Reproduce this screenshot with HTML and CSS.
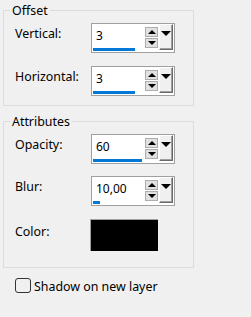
FILE: index.html
```html
<!DOCTYPE html>
<html lang="en">
<head>
    <meta charset="UTF-8">
    <title>Drop Shadow</title>
    <link rel="stylesheet" href="styles.css">
</head>
<body>
    <div class="group group-offset">
        <span class="group-title">Offset</span>
        <div class="row">
            <span class="label">Vertical:</span>
            <div class="spin">
                <div class="spin-field">
                    <span class="spin-value">3</span>
                    <div class="spin-bar" style="width: 42px"></div>
                </div>
                <div class="spin-arrows">
                    <div class="spin-btn"><span class="tri-up"></span></div>
                    <div class="spin-btn"><span class="tri-down"></span></div>
                </div>
                <div class="spin-drop"><span class="tri-drop"></span></div>
            </div>
        </div>
        <div class="row">
            <span class="label">Horizontal:</span>
            <div class="spin">
                <div class="spin-field">
                    <span class="spin-value">3</span>
                    <div class="spin-bar" style="width: 42px"></div>
                </div>
                <div class="spin-arrows">
                    <div class="spin-btn"><span class="tri-up"></span></div>
                    <div class="spin-btn"><span class="tri-down"></span></div>
                </div>
                <div class="spin-drop"><span class="tri-drop"></span></div>
            </div>
        </div>
    </div>

    <div class="group group-attr">
        <span class="group-title">Attributes</span>
        <div class="row">
            <span class="label">Opacity:</span>
            <div class="spin">
                <div class="spin-field">
                    <span class="spin-value">60</span>
                    <div class="spin-bar" style="width: 49px"></div>
                </div>
                <div class="spin-arrows">
                    <div class="spin-btn"><span class="tri-up"></span></div>
                    <div class="spin-btn"><span class="tri-down"></span></div>
                </div>
                <div class="spin-drop"><span class="tri-drop"></span></div>
            </div>
        </div>
        <div class="row">
            <span class="label">Blur:</span>
            <div class="spin">
                <div class="spin-field">
                    <span class="spin-value">10,00</span>
                    <div class="spin-bar" style="width: 7px"></div>
                </div>
                <div class="spin-arrows">
                    <div class="spin-btn"><span class="tri-up"></span></div>
                    <div class="spin-btn"><span class="tri-down"></span></div>
                </div>
                <div class="spin-drop"><span class="tri-drop"></span></div>
            </div>
        </div>
        <div class="row row-color">
            <span class="label label-color">Color:</span>
            <div class="swatch"></div>
        </div>
    </div>

    <label class="check">
        <span class="check-box"></span>
        <span class="check-text">Shadow on new layer</span>
    </label>
</body>
</html>
```

FILE: styles.css
```css
* {
    box-sizing: border-box;
}

body {
    margin: 0;
    padding-top: 10px;
    width: 251px;
    height: 317px;
    background-color: #f0f0f0;
    font-family: "Noto Sans", "DejaVu Sans", sans-serif;
    font-size: 12.4px;
    line-height: 16px;
    color: #000;
}

/* group boxes */
.group {
    position: relative;
    margin-left: 3px;
    width: 191px;
    border: 1px solid #dcdcdc;
    padding-left: 11px;
    display: flex;
    flex-direction: column;
}

.group-offset {
    padding-top: 12px;
    padding-bottom: 9px;
    gap: 13px;
}

.group-attr {
    margin-top: 15px;
    padding-top: 12px;
    padding-bottom: 16px;
    gap: 12px;
}

.group-title {
    position: absolute; /* sits over the top border */
    top: -8px;
    left: 6px;
    padding: 0 2px;
    background-color: #f0f0f0;
}

.row {
    display: flex;
    align-items: flex-start;
}

.row-color {
    margin-top: 1px;
}

.label {
    width: 76px;
    padding-top: 3px;
}

.label-color {
    padding-top: 5px;
}

/* spin edit */
.spin {
    display: flex;
    width: 84px;
    height: 30px;
    border: 1px solid #a0a0a0;
    background-color: #fff;
}

.spin-field {
    width: 53px;
    padding-top: 4px;
    display: flex;
    flex-direction: column;
}

.spin-value {
    padding-left: 4px;
    height: 16px;
    font-size: 12px;
}

.spin-bar {
    margin-top: 4px;
    margin-left: 1px;
    height: 3px;
    background-color: #0078d7;
}

.spin-arrows {
    width: 13px;
    margin-top: 3px;
    display: flex;
    flex-direction: column;
    gap: 1px;
}

.spin-btn {
    height: 10px;
    border: 1px solid #adadad;
    background-color: #e1e1e1;
    display: flex;
    align-items: center;
    justify-content: center;
}

.tri-up {
    width: 0;
    height: 0;
    border-left: 4px solid transparent;
    border-right: 4px solid transparent;
    border-bottom: 4px solid #000;
}

.tri-down {
    width: 0;
    height: 0;
    border-left: 4px solid transparent;
    border-right: 4px solid transparent;
    border-top: 4px solid #000;
}

.spin-drop {
    width: 14px;
    height: 26px;
    margin-left: 1px;
    background-color: #f0f0f0;
    border-top: 1px solid #fff;
    border-left: 1px solid #fff;
    border-right: 1px solid #696969;
    border-bottom: 1px solid #696969;
    box-shadow: inset -1px -1px 0 #a0a0a0;
    display: flex;
    justify-content: center;
    padding-top: 6px;
}

.tri-drop {
    width: 0;
    height: 0;
    margin-left: -1px;
    border-left: 5px solid transparent;
    border-right: 5px solid transparent;
    border-top: 5px solid #000;
}

.swatch {
    width: 68px;
    height: 32px;
    margin-left: -1px;
    background-color: #000;
    border-top: 1px solid #a0a0a0;
    border-left: 1px solid #a0a0a0;
}

/* checkbox */
.check {
    display: flex;
    align-items: flex-start;
    margin-top: 10px;
    margin-left: 15px;
}

.check-box {
    width: 16px;
    height: 15px;
    border: 1px solid #333;
    border-radius: 3px;
    background-color: #f0f0f0;
}

.check-text {
    margin-left: 3px;
    margin-top: 1px;
}
```
